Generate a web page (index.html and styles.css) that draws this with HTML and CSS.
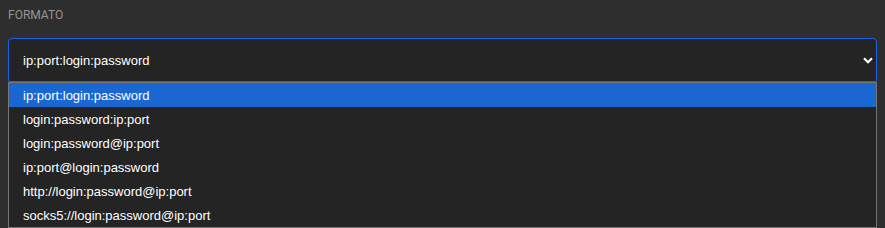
FILE: index.html
```html
<!DOCTYPE html>
<html lang="it">
<head>
  <meta charset="UTF-8" />
  <title>Formato proxy</title>
  <link rel="stylesheet" href="styles.css">
</head>
<body>
  <div class="field">
    <label class="field-label">Formato</label>

    <div class="select open">
      <span class="select-value">ip:port:login:password</span>
      <svg class="chevron" width="10" height="7" viewBox="0 0 10 7">
        <path d="M1 1.2 L5 5.2 L9 1.2" fill="none" stroke="#fff" stroke-width="2.2" />
      </svg>
    </div>

    <ul class="options">
      <li class="selected">ip:port:login:password</li>
      <li>login:password:ip:port</li>
      <li>login:password@ip:port</li>
      <li>ip:port@login:password</li>
      <li>http://login:password@ip:port</li>
      <li>socks5://login:password@ip:port</li>
    </ul>
  </div>
</body>
</html>
```

FILE: styles.css
```css
body {
  margin: 0;
  padding: 8px;
  background: #2e2e2e;
  font-family: Roboto, Arial, sans-serif;
  color: #fff;
}

.field-label {
  display: block;
  font-size: 12px;
  line-height: 14px;
  text-transform: uppercase;
  color: #959595;
  margin-top: 0;
}

.select {
  margin-top: 16px;
  height: 42px;
  border: 1px solid #1a62e6;
  border-radius: 4px;
  background: #242424;
  display: flex;
  align-items: center;
  justify-content: space-between;
  padding: 0 3px 0 14px;
  font-family: "Liberation Sans", Arial, sans-serif;
  font-size: 13px;
}

.select.open {
  border-bottom-left-radius: 2px;
  border-bottom-right-radius: 2px;
}

.options {
  list-style: none;
  margin: 0;
  padding: 0;
  border: 1px solid #767676;
  background: #242424;
  font-family: "Liberation Sans", Arial, sans-serif;
  font-size: 13px;
}

.options li {
  height: 24px;
  line-height: 25px;
  padding: 0 14px;
}

.options li.selected {
  background: #1a67d2;
}
```
